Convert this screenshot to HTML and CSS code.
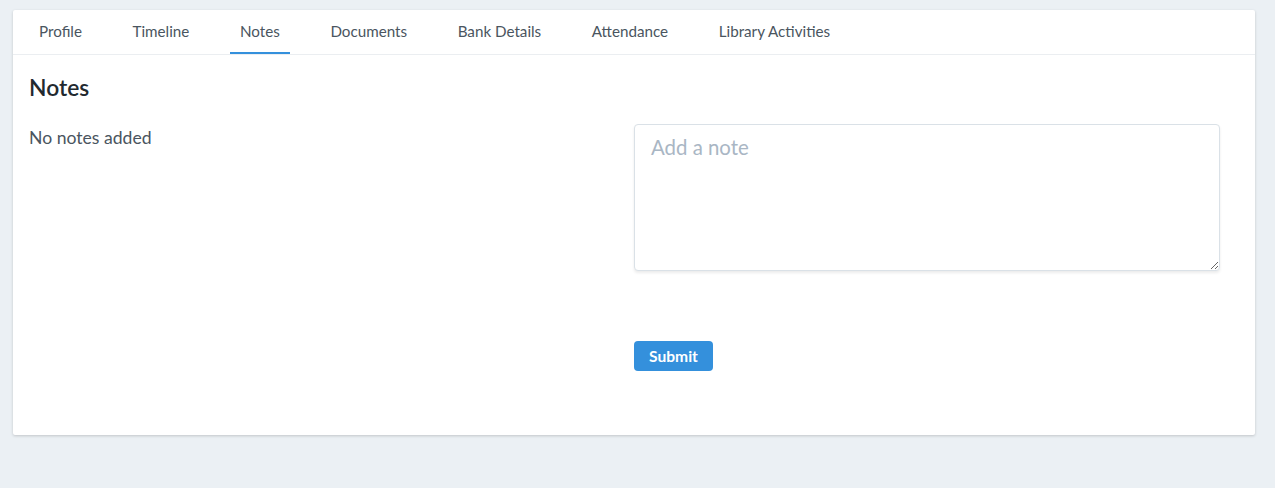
FILE: index.html
```html
<!DOCTYPE html>
<html lang="en">
<head>
    <meta charset="UTF-8">
    <title>Notes</title>
    <link rel="stylesheet" href="styles.css">
</head>
<body>
    <div class="card">
        <ul class="tabs">
            <li class="tab">Profile</li>
            <li class="tab">Timeline</li>
            <li class="tab active">Notes</li>
            <li class="tab">Documents</li>
            <li class="tab">Bank Details</li>
            <li class="tab">Attendance</li>
            <li class="tab">Library Activities</li>
        </ul>
        <div class="card-body">
            <h2 class="title">Notes</h2>
            <div class="columns">
                <div class="notes-list">
                    <p>No notes added</p>
                </div>
                <div class="note-form">
                    <textarea class="note-input" placeholder="Add a note"></textarea>
                    <button class="btn-submit">Submit</button>
                </div>
            </div>
        </div>
    </div>
</body>
</html>
```

FILE: styles.css
```css
body {
    margin: 0;
    padding: 10px 20px 53px 13px;
    background: #ebf0f4;
    font-family: Lato, "Open Sans", sans-serif;
    color: #3d4852;
}

.card {
    background: #fff;
    border-radius: 2px;
    box-shadow: 0 1px 3px rgba(0, 0, 0, 0.18);
    height: 425px;
}

.tabs {
    list-style: none;
    margin: 0;
    padding: 0 16px;
    display: flex;
    gap: 30.6px;
    border-bottom: 1px solid #ebeef1;
    height: 44px;
}

.tab {
    padding: 0 10px;
    font-size: 15.2px;
    line-height: 42px;
    color: #4a5560;
    border-bottom: 2px solid transparent;
}

.tab.active {
    border-bottom-color: #3490dc;
}

.card-body {
    padding: 18px 16px 0;
}

.title {
    margin: 0;
    font-size: 22.8px;
    font-weight: 600;
    line-height: 28px;
    color: #22292f;
}

.columns {
    display: grid;
    grid-template-columns: 1fr 1fr;
    margin-top: 23px;
}

.notes-list p {
    margin: 3px 0 0;
    font-size: 17.6px;
    color: #4a5560;
}

.note-form {
    display: flex;
    flex-direction: column;
    align-items: flex-start;
}

.note-input {
    width: 586px;
    height: 147px;
    box-sizing: border-box;
    border: 1px solid #dae1e7;
    border-radius: 4px;
    box-shadow: 0 2px 3px rgba(0, 0, 0, 0.08);
    padding: 10px 16px;
    font-family: inherit;
    font-size: 20.4px;
    color: #3d4852;
    resize: vertical;
}

.note-input::placeholder {
    color: #a9b6c4;
}

.btn-submit {
    margin-top: 70px;
    background: #3490dc;
    color: #fff;
    border: 0;
    border-radius: 4px;
    width: 79px;
    height: 30px;
    font-family: inherit;
    font-size: 15.6px;
    font-weight: 700;
}
```
